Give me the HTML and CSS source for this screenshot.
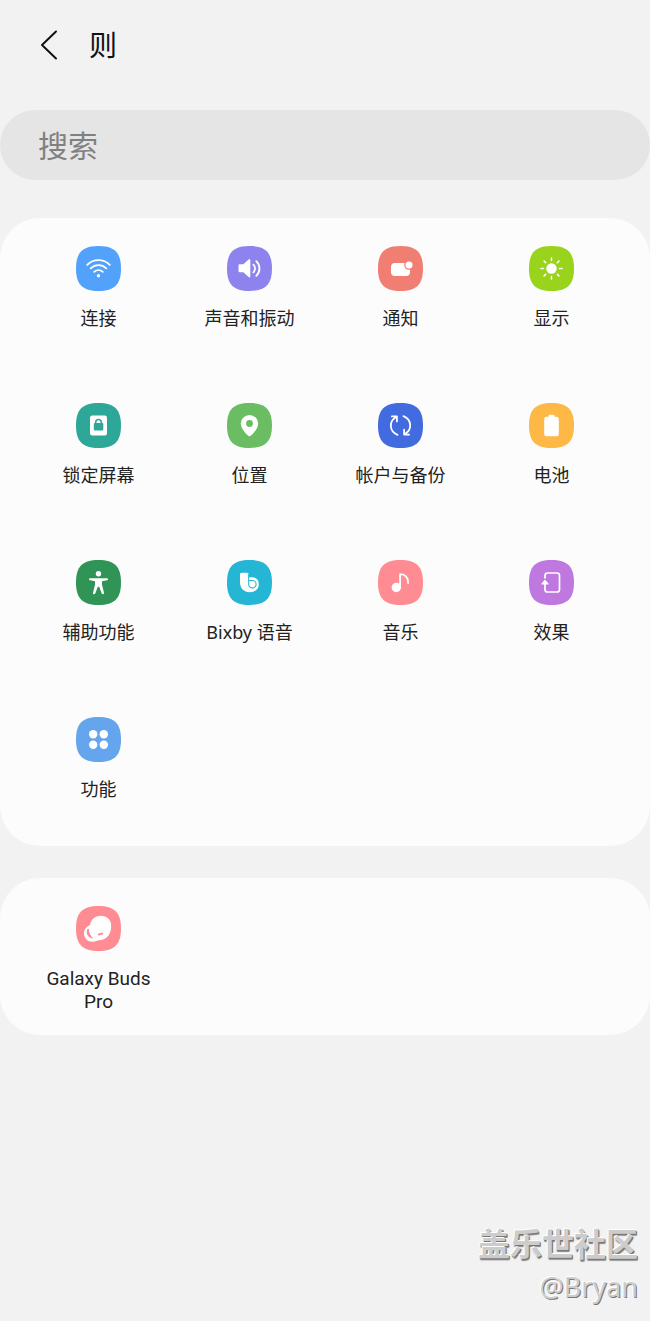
FILE: index.html
```html
<!DOCTYPE html>
<html lang="zh-CN">
<head>
    <meta charset="UTF-8">
    <meta name="viewport" content="width=device-width, initial-scale=1.0">
    <title>则</title>
    <link rel="stylesheet" href="styles.css">
</head>
<body>
    <svg class="defs" aria-hidden="true">
        <symbol id="tile" viewBox="0 0 45 45">
            <path d="M22.500 0C38.500 0 45 6.500 45 22.500S38.500 45 22.500 45 0 38.500 0 22.500 6.500 0 22.500 0Z"/>
        </symbol>
    </svg>

    <header class="header">
        <button class="back-button" aria-label="返回">
            <svg width="18" height="30" viewBox="0 0 18 30" fill="none" stroke="#111" stroke-width="2" stroke-linecap="round" stroke-linejoin="round"><path d="M16 1.500 2 15l14 13.500"/></svg>
        </button>
        <h1>则</h1>
    </header>

    <form class="search" role="search">
        <input class="search-input" type="text" placeholder="搜索" aria-label="搜索">
    </form>

    <main class="content">
        <nav class="card" aria-label="设置">
            <a class="item" href="#">
                <svg class="icon blue" viewBox="0 0 45 45">
                    <use href="#tile"/>
                    <g fill="none" stroke="#fff" stroke-width="1.800" stroke-linecap="round">
                        <path d="M11.200 18.800c6.400-6.100 16.200-6.100 22.600 0"/>
                        <path d="M14.700 22.300c4.500-4.200 11.100-4.200 15.600 0"/>
                        <path d="M18.200 25.900c2.500-2.300 6.100-2.300 8.600 0"/>
                    </g>
                    <circle cx="22.500" cy="29.800" r="1.700" fill="#fff"/>
                </svg>
                <span class="label">连接</span>
            </a>
            <a class="item" href="#">
                <svg class="icon violet" viewBox="0 0 45 45">
                    <use href="#tile"/>
                    <path d="M11.500 19.500q0-1.200 1.200-1.200h3.600l5.300-4.800q1.700-1.200 1.700.7v16.200q0 1.900-1.700.7l-5.300-4.800h-3.600q-1.200 0-1.200-1.200Z" fill="#fff"/>
                    <g fill="none" stroke="#fff" stroke-width="1.900" stroke-linecap="round">
                        <path d="M26.400 18.700c2.100 2.200 2.100 5.400 0 7.600"/>
                        <path d="M29.300 15.200c4.200 4.200 4.200 10.400 0 14.600"/>
                    </g>
                </svg>
                <span class="label">声音和振动</span>
            </a>
            <a class="item" href="#">
                <svg class="icon coral" viewBox="0 0 45 45">
                    <use href="#tile"/>
                    <rect x="13" y="17" width="19" height="13" rx="4" fill="#fff"/>
                    <circle class="cut" cx="31" cy="19" r="4.800"/>
                    <circle cx="31" cy="19" r="3.500" fill="#fff"/>
                </svg>
                <span class="label">通知</span>
            </a>
            <a class="item" href="#">
                <svg class="icon lime" viewBox="0 0 45 45">
                    <use href="#tile"/>
                    <circle cx="22.500" cy="22.500" r="5.200" fill="#fff"/>
                    <path d="M22.500 12v2.500M22.500 30.500V33M12 22.500h2.500M30.500 22.500H33M15.100 15.100l1.600 1.600M28.300 28.300l1.600 1.600M15.100 29.900l1.600-1.600M28.300 16.700l1.600-1.600" stroke="#fff" stroke-width="1.500" stroke-linecap="round"/>
                </svg>
                <span class="label">显示</span>
            </a>
            <a class="item" href="#">
                <svg class="icon teal" viewBox="0 0 45 45">
                    <use href="#tile"/>
                    <rect x="14" y="12.500" width="17" height="20" rx="2.200" fill="#fff"/>
                    <rect class="cut" x="17.800" y="20" width="9.500" height="7.500" rx="1"/>
                    <path class="cut-line" d="M19.700 21v-1.600a2.800 2.800 0 0 1 5.600 0V21" fill="none" stroke-width="1.500"/>
                </svg>
                <span class="label">锁定屏幕</span>
            </a>
            <a class="item" href="#">
                <svg class="icon green" viewBox="0 0 45 45">
                    <use href="#tile"/>
                    <path d="M22.500 33.500c-1 0-8.700-7-8.700-12.900a8.700 8.700 0 0 1 17.400 0c0 5.900-7.700 12.900-8.700 12.900Z" fill="#fff"/>
                    <circle class="cut" cx="22.500" cy="20.500" r="3.400"/>
                </svg>
                <span class="label">位置</span>
            </a>
            <a class="item" href="#">
                <svg class="icon royal" viewBox="0 0 45 45">
                    <use href="#tile"/>
                    <g fill="none" stroke="#fff" stroke-width="1.800" stroke-linecap="round" stroke-linejoin="round">
                        <path d="M19.500 31.800C11 28.200 10.500 18 18.600 13.700M13.900 13.400h5v5"/>
                        <path d="M25.500 13.200C34 16.800 34.500 27 26.400 31.300M31.100 31.600h-5v-5"/>
                    </g>
                </svg>
                <span class="label">帐户与备份</span>
            </a>
            <a class="item" href="#">
                <svg class="icon amber" viewBox="0 0 45 45">
                    <use href="#tile"/>
                    <path d="M19.500 12.500q0-.8.800-.8h4.400q.8 0 .8.800v1.300h2.300q2 0 2 2v15.400q0 2-2 2H17.200q-2 0-2-2V15.800q0-2 2-2h2.300Z" fill="#fff"/>
                </svg>
                <span class="label">电池</span>
            </a>
            <a class="item" href="#">
                <svg class="icon forest" viewBox="0 0 45 45">
                    <use href="#tile"/>
                    <circle cx="22.500" cy="13.800" r="2.700" fill="#fff"/>
                    <path d="M14 18.300h17q1 0 1 1t-1 1l-5 1v3.400l2 8q.3 1.500-1 1.500-1 0-1.400-1l-2.400-6.400h-1.400l-2.400 6.400q-.4 1-1.400 1-1.300 0-1-1.500l2-8v-3.400l-5-1q-1 0-1-1t1-1Z" fill="#fff"/>
                </svg>
                <span class="label">辅助功能</span>
            </a>
            <a class="item" href="#">
                <svg class="icon cyan" viewBox="0 0 45 45">
                    <use href="#tile"/>
                    <path d="M14.500 12.800H20q2 0 2 2v2.500q9.800-1.200 9.800 7.200c0 4.600-3.800 7.700-9 7.700-6 0-9.800-4.200-9.800-9.700v-8.200q0-1.500 1.500-1.500Z" fill="#fff"/>
                    <path class="cut-line" d="M21.700 14v10.200a3.700 3.700 0 1 0 3.700-3.700h-3.700" fill="none" stroke-width="1.100"/>
                </svg>
                <span class="label">Bixby 语音</span>
            </a>
            <a class="item" href="#">
                <svg class="icon pink" viewBox="0 0 45 45">
                    <use href="#tile"/>
                    <circle cx="18.300" cy="27.500" r="4.700" fill="#fff"/>
                    <path d="M22.100 28V14.200c5.200.2 8.300 3.500 8 8.800" fill="none" stroke="#fff" stroke-width="1.800" stroke-linecap="round" stroke-linejoin="round"/>
                </svg>
                <span class="label">音乐</span>
            </a>
            <a class="item" href="#">
                <svg class="icon purple" viewBox="0 0 45 45">
                    <use href="#tile"/>
                    <path d="M16 18v-2.500q0-2.500 2.500-2.500h9.500q2.500 0 2.500 2.500v14q0 2.500-2.500 2.500h-9.500q-2.500 0-2.500-2.500V22" fill="none" stroke="#fff" stroke-width="1.700" stroke-linecap="round"/>
                    <path d="m16 20.500 3 3.500h-6Z" fill="#fff" stroke="#fff" stroke-width="1.200" stroke-linejoin="round"/>
                </svg>
                <span class="label">效果</span>
            </a>
            <a class="item" href="#">
                <svg class="icon sky" viewBox="0 0 45 45">
                    <use href="#tile"/>
                    <g fill="#fff">
                        <circle cx="17.200" cy="17.200" r="4.200"/>
                        <circle cx="27.800" cy="17.200" r="4.200"/>
                        <circle cx="17.200" cy="27.800" r="4.200"/>
                        <circle cx="27.800" cy="27.800" r="4.200"/>
                    </g>
                </svg>
                <span class="label">功能</span>
            </a>
        </nav>

        <nav class="card" aria-label="设备">
            <a class="item" href="#">
                <svg class="icon pink" viewBox="0 0 45 45">
                    <use href="#tile"/>
                    <path d="M14 19C15 13.500 19 9.800 25 9.800c6 0 10.200 4.200 10.200 10.200 0 8-4.200 13.200-10.200 14-1.800.2-3 .4-4.500 1C14 37.500 8 33.500 8 27.500 8 23 10.500 21 14 19Z" fill="#fff"/>
                    <path class="cut" d="M11.500 22.800c-2.200 4.500.5 9.400 6 9.700-3-2.500-4.600-5.500-4.700-9.400q-.6-.9-1.300-.3Z"/>
                    <path class="cut-line" d="m22.800 28.500 3.500-.9" fill="none" stroke-width="2" stroke-linecap="round"/>
                </svg>
                <span class="label latin">Galaxy Buds Pro</span>
            </a>
        </nav>
    </main>

    <footer class="watermark">
        <p class="community">盖乐世社区</p>
        <p class="author">@Bryan</p>
    </footer>
</body>
</html>
```

FILE: styles.css
```css
* {
    box-sizing: border-box;
}

body {
    display: flex;
    flex-direction: column;
    min-height: 100vh;
    margin: 0;
    background-color: #f2f2f2;
    color: #222;
    font-family: "Noto Sans", "Noto Sans CJK SC", sans-serif;
}

.defs {
    position: absolute;
    width: 0;
    height: 0;
}

.header {
    display: flex;
    align-items: center;
    gap: 31px;
    height: 90px;
    padding: 0 40px;
}

.back-button {
    display: flex;
    padding: 0;
    border: none;
    background: none;
    cursor: pointer;
}

h1 {
    margin: 0;
    color: #111;
    font-size: 28px;
    font-weight: 400;
    line-height: 40px;
}

.search {
    margin: 20px 0 38px;
}

.search-input {
    display: block;
    width: 100%;
    height: 70px;
    padding: 0 38px;
    border: none;
    border-radius: 35px;
    background-color: #e5e5e5;
    color: #222;
    font-family: inherit;
    font-size: 30px;
}

.search-input::placeholder {
    color: #808080;
    opacity: 1;
}

.content {
    display: flex;
    flex-direction: column;
    gap: 32px;
}

.card {
    display: grid;
    grid-template-columns: repeat(4, 1fr);
    grid-auto-rows: minmax(157px, auto);
    padding: 0 23px;
    border-radius: 40px;
    background-color: #fcfcfc;
}

.item {
    display: flex;
    flex-direction: column;
    align-items: center;
    gap: 16px;
    padding: 28px 16px 16px;
    color: inherit;
    text-decoration: none;
}

.icon {
    width: 45px;
    height: 45px;
    fill: currentColor;
}

.cut {
    fill: currentColor;
}

.cut-line {
    stroke: currentColor;
}

.label {
    font-size: 18px;
    line-height: 23px;
    text-align: center;
}

.latin {
    font-family: Roboto, sans-serif;
    font-size: 19px;
}

.blue { color: #52a2fc; }
.violet { color: #8e83ee; }
.coral { color: #f07e72; }
.lime { color: #99d31b; }
.teal { color: #2da797; }
.green { color: #6bbd63; }
.royal { color: #436be0; }
.amber { color: #fdb845; }
.forest { color: #2f9455; }
.cyan { color: #25b6d5; }
.pink { color: #ff8c92; }
.purple { color: #be78e0; }
.sky { color: #65a5ee; }

.watermark {
    margin-top: auto;
    padding: 0 12px 13px;
    color: #ccc;
    text-align: right;
}

.watermark p {
    margin: 0;
}

.community {
    font-size: 32px;
    font-weight: 700;
    line-height: 44px;
    text-shadow: -1px -1px 0 #fff, 1px 1px 0 #777, 1px 2px 1px #888;
}

.author {
    font-size: 27px;
    line-height: 42px;
    text-shadow: -1px -1px 0 #fff, 1px 1px 0 #777;
}
```
